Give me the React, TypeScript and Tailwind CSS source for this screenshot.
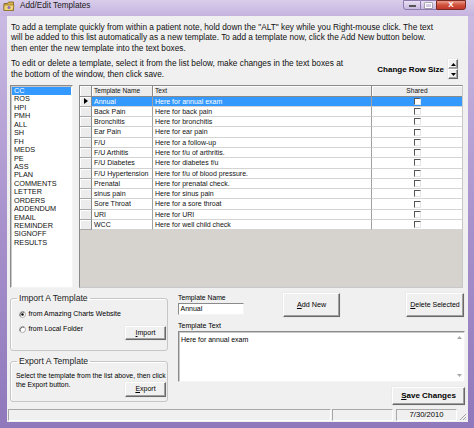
import React from "react";

const rows: [string, string][] = [
  ["Annual", "Here for annual exam"],
  ["Back Pain", "Here for back pain"],
  ["Bronchitis", "Here for bronchitis"],
  ["Ear Pain", "Here for ear pain"],
  ["F/U", "Here for a follow-up"],
  ["F/U Arthitis", "Here for f/u of arthritis."],
  ["F/U Diabetes", "Here for diabetes f/u"],
  ["F/U Hypertension", "Here for f/u of blood pressure."],
  ["Prenatal", "Here for prenatal check."],
  ["sinus pain", "Here for sinus pain"],
  ["Sore Throat", "Here for a sore throat"],
  ["URI", "Here for URI"],
  ["WCC", "Here for well child check"],
];

const listItems = [
  "CC", "ROS", "HPI", "PMH", "ALL", "SH", "FH", "MEDS", "PE", "ASS", "PLAN",
  "COMMENTS", "LETTER", "ORDERS", "ADDENDUM", "EMAIL", "REMINDER", "SIGNOFF", "RESULTS",
];

function Btn({ children, className }: { children: React.ReactNode; className: string }) {
  return (
    <div
      className={
        "flex items-center justify-center bg-[#f0f0f0] border-t border-l border-t-[#ffffff] border-l-[#ffffff] border-r border-b border-r-[#696969] border-b-[#696969] shadow-[inset_-1px_-1px_0_#a0a0a0,0_0_0_0.5px_#e3e3e3] " +
        className
      }
    >
      {children}
    </div>
  );
}

function Check() {
  return (
    <div className="w-[7px] h-[7px] bg-white border-t border-l border-t-[#555] border-l-[#555] border-r border-b border-r-[#e6e6e6] border-b-[#e6e6e6]" />
  );
}

function Radio({ checked }: { checked: boolean }) {
  return (
    <svg width="7" height="7" viewBox="0 0 7 7">
      <circle cx="3.5" cy="3.5" r="3" fill="#fff" stroke="#9a9a9a" strokeWidth="0.8" />
      <path d="M1.3 5.2 A3 3 0 0 1 5.2 1.3" fill="none" stroke="#555" strokeWidth="0.9" />
      {checked && <circle cx="3.5" cy="3.5" r="1.2" fill="#000" />}
    </svg>
  );
}

export default function App() {
  return (
    <div className="w-[474px] h-[428px] flex flex-col bg-gradient-to-b from-[#cdbde4] via-[#a993cd] to-[#8f78bb] font-['Liberation_Sans',Arial,sans-serif] text-black overflow-hidden">
      {/* Title bar */}
      <div className="h-[16px] flex items-start bg-gradient-to-b from-[#d9cdea] to-[#c5b3df]">
        <div className="flex items-center h-[13px] pl-[3px]">
          <svg width="12" height="11" viewBox="0 0 12 11">
            <path d="M1 2.5 L4.5 2.5 L5.5 1 L10.5 1 L10.5 9.5 L1 9.5 Z" fill="#d9b24a" stroke="#7a5e1a" strokeWidth="0.8" />
            <path d="M1 4 L11 4 L10 9.5 L1 9.5 Z" fill="#f1d67a" stroke="#7a5e1a" strokeWidth="0.6" />
            <circle cx="6" cy="6.6" r="1.5" fill="#8a6cc0" />
          </svg>
          <span className="ml-[5px] text-[8.2px] leading-none text-[#1a1a1a]">Add/Edit Templates</span>
        </div>
        <div className="flex-1" />
        <div className="flex h-[10px] mr-[8px]">
          <div className="w-[18px] h-full rounded-bl-[3px] bg-gradient-to-b from-[#e8e0f2] to-[#c7b8de] border border-[#8d7bb0] flex items-end justify-center pb-[2px]">
            <div className="w-[7px] h-[2px] bg-white border border-[#555]" />
          </div>
          <div className="w-[15px] h-full bg-gradient-to-b from-[#e8e0f2] to-[#c7b8de] border-y border-[#8d7bb0] flex items-center justify-center">
            <div className="w-[7px] h-[5px] border border-white shadow-[0_0_0_0.5px_#777]" />
          </div>
          <div className="w-[30px] h-full rounded-br-[3px] bg-gradient-to-b from-[#e89a8a] via-[#d0513b] to-[#c0392b] border border-[#7a2a22] flex items-center justify-center">
            <span className="text-white font-bold text-[8px] leading-none">X</span>
          </div>
        </div>
      </div>

      {/* Window body */}
      <div className="flex-1 flex pl-[7px] pr-[6px] pb-[6px]">
        <div className="w-[461px] h-[406px] bg-[#f0f0f0] flex flex-col">
          {/* Top instructions */}
          <div className="h-[42px] pt-[5.5px] pl-[4px] text-[8.3px] leading-[10.7px] whitespace-nowrap text-[#111]">
            <div>To add a template quickly from within a patient note, hold down the "ALT" key while you Right-mouse click. The text</div>
            <div>will be added to this list automatically as a new template. To add a template now, click the Add New button below.</div>
            <div>then enter the new template into the text boxes.</div>
          </div>
          <div className="h-[22px] flex items-center pl-[4px] pr-[10px]">
            <div className="text-[8.3px] leading-[10.7px] whitespace-nowrap text-[#111]">
              <div>To edit or delete a template, select it from the list below, make changes in the text boxes at</div>
              <div>the bottom of the window, then click save.</div>
            </div>
            <div className="flex-1" />
            <span className="font-bold text-[8px] leading-none mt-[1px]">Change Row Size</span>
            <div className="ml-[4px] flex flex-col w-[10px]">
              <Btn className="h-[10px] w-[10px]">
                <svg width="5" height="3" viewBox="0 0 5 3"><path d="M2.5 0 L5 3 L0 3 Z" fill="#000" /></svg>
              </Btn>
              <Btn className="h-[10px] w-[10px]">
                <svg width="5" height="3" viewBox="0 0 5 3"><path d="M0 0 L5 0 L2.5 3 Z" fill="#000" /></svg>
              </Btn>
            </div>
          </div>

          {/* Main area: list + grid */}
          <div className="mt-[5px] h-[203px] flex pl-[3px]">
            <div className="w-[63px] h-full bg-white border-t border-l border-t-[#8a8a8a] border-l-[#8a8a8a] border-r border-b border-r-[#f4f4f4] border-b-[#f4f4f4] shadow-[inset_1px_1px_0_#c8c8c8] pt-[1px] px-[1px]">
              {listItems.map((it, i) => (
                <div
                  key={it}
                  className={
                    "h-[8.45px] leading-[8.45px] text-[7.3px] pl-[2px] whitespace-nowrap " +
                    (i === 0 ? "bg-[#3399ff] text-white" : "text-[#111]")
                  }
                >
                  {it}
                </div>
              ))}
            </div>

            <div className="ml-[6px] w-[384px] h-full flex flex-col bg-[#d6d3ce] border-l border-t border-r border-b border-l-[#8a8a8a] border-t-[#8a8a8a] border-r-[#c8c8c8] border-b-[#c8c8c8]">
              {/* header */}
              <div className="flex h-[10.5px] text-[6.6px] leading-[10px] text-[#111]">
                <div className="w-[12px] bg-[#ececec] border-r border-b border-[#8a8a8a] shadow-[inset_1px_1px_0_#fff]" />
                <div className="w-[61px] bg-[#ececec] border-r border-b border-[#8a8a8a] shadow-[inset_1px_1px_0_#fff] pl-[2px] whitespace-nowrap">Template Name</div>
                <div className="w-[219px] bg-[#ececec] border-r border-b border-[#8a8a8a] shadow-[inset_1px_1px_0_#fff] pl-[2px]">Text</div>
                <div className="w-[90px] bg-[#ececec] border-b border-[#8a8a8a] shadow-[inset_1px_1px_0_#fff] text-center">Shared</div>
              </div>
              {rows.map(([n, t], i) => {
                const sel = i === 0;
                return (
                  <div key={n} className="flex h-[10.3px] text-[7px] leading-[9.5px]">
                    <div className="w-[12px] bg-[#ececec] border-r border-b border-r-[#8a8a8a] border-b-[#a8a8a8] shadow-[inset_1px_1px_0_#fff] flex items-center justify-center">
                      {sel && (
                        <svg width="4" height="6" viewBox="0 0 4 6"><path d="M0 0 L4 3 L0 6 Z" fill="#000" /></svg>
                      )}
                    </div>
                    <div className={"w-[61px] border-r border-b border-r-[#a0a0a0] border-b-[#d4d4d4] pl-[2px] whitespace-nowrap " + (sel ? "bg-[#3399ff] text-white" : "bg-white text-[#111]")}>{n}</div>
                    <div className={"w-[219px] border-r border-b border-r-[#a0a0a0] border-b-[#d4d4d4] pl-[2px] whitespace-nowrap " + (sel ? "bg-[#3399ff] text-white" : "bg-white text-[#111]")}>{t}</div>
                    <div className={"w-[90px] border-b border-b-[#d4d4d4] flex items-center justify-center " + (sel ? "bg-[#3399ff]" : "bg-white")}>
                      <div className="ml-[1px]"><Check /></div>
                    </div>
                  </div>
                );
              })}
            </div>
          </div>

          {/* Bottom area */}
          <div className="h-[118px] flex pl-[3px]">
            {/* left column */}
            <div className="w-[158px] flex flex-col">
              <fieldset className="mt-[5px] h-[58px] border border-[#c6c6c6] rounded-[3px] shadow-[inset_1px_1px_0_#fff] px-[8px] pr-[1px]">
                <legend className="ml-[-2px] px-[2px] text-[8.6px] leading-[10px] text-[#222]">Import A Template</legend>
                <div className="mt-[6px] flex items-center h-[10px] text-[7px]">
                  <Radio checked={true} />
                  <span className="ml-[2.5px] whitespace-nowrap">from Amazing Charts Website</span>
                </div>
                <div className="mt-[5px] flex items-start">
                  <div className="flex items-center h-[10px] text-[7px]">
                    <Radio checked={false} />
                    <span className="ml-[2.5px] whitespace-nowrap">from Local Folder</span>
                  </div>
                  <div className="flex-1" />
                  <Btn className="mt-[2px] w-[41px] h-[14px] text-[7px]">
                    <span><span className="underline">I</span>mport</span>
                  </Btn>
                </div>
              </fieldset>
              <fieldset className="mt-[5px] h-[46px] border border-[#c6c6c6] rounded-[3px] shadow-[inset_1px_1px_0_#fff] pl-[5px] pr-[1px]">
                <legend className="ml-[1px] px-[2px] text-[8.6px] leading-[10px] text-[#222]">Export A Template</legend>
                <div className="mt-[4.5px] text-[6.9px] leading-[9px] whitespace-nowrap">Select the template from the list above, then click</div>
                <div className="flex items-start">
                  <div className="text-[6.9px] leading-[9px] whitespace-nowrap">the Export button.</div>
                  <div className="flex-1" />
                  <Btn className="mt-[2.5px] w-[41px] h-[15px] text-[7px]">
                    <span><span className="underline">E</span>xport</span>
                  </Btn>
                </div>
              </fieldset>
            </div>

            {/* right column */}
            <div className="ml-[10px] w-[287px] flex flex-col">
              <div className="mt-[5px] flex items-start h-[24px]">
                <div className="w-[66px] flex flex-col">
                  <div className="text-[6.8px] leading-[9px] -mt-[0.5px] whitespace-nowrap">Template Name</div>
                  <div className="mt-[1.5px] h-[12px] bg-white border-t border-l border-t-[#8a8a8a] border-l-[#8a8a8a] border-r border-b border-r-[#f4f4f4] border-b-[#f4f4f4] text-[7px] leading-[10px] pl-[1.5px]">
                    Annual
                  </div>
                </div>
                <Btn className="ml-[39px] w-[57px] h-[24px] text-[7.2px]">
                  <span><span className="underline">A</span>dd New</span>
                </Btn>
                <Btn className="ml-[66px] w-[58px] h-[24px] text-[7px]">
                  <span className="whitespace-nowrap"><span className="underline">D</span>elete Selected</span>
                </Btn>
              </div>
              <div className="mt-[3.5px] text-[7px] leading-[9px]">Template Text</div>
              <div className="mt-[1.5px] h-[51px] flex bg-white border-t border-l border-t-[#8a8a8a] border-l-[#8a8a8a] border-r border-b border-r-[#f4f4f4] border-b-[#f4f4f4] shadow-[inset_1px_1px_0_#c8c8c8]">
                <div className="flex-1 text-[7px] leading-[9px] pl-[2px] pt-[3px]">Here for annual exam</div>
                <div className="w-[10px] flex flex-col justify-between items-center py-[4px]">
                  <svg width="5" height="3" viewBox="0 0 5 3"><path d="M2.5 0 L5 3 L0 3 Z" fill="#a8a8a8" /></svg>
                  <svg width="5" height="3" viewBox="0 0 5 3"><path d="M0 0 L5 0 L2.5 3 Z" fill="#a8a8a8" /></svg>
                </div>
              </div>
              <div className="mt-[5px] flex justify-end">
                <Btn className="w-[73px] h-[18px] text-[8px] font-bold">
                  <span className="whitespace-nowrap"><span className="underline">S</span>ave Changes</span>
                </Btn>
              </div>
            </div>
          </div>

          {/* Status bar */}
          <div className="mt-[3px] h-[12px] flex">
            <div className="ml-[1px] w-[323px] h-full border-t border-l border-t-[#a8a8a8] border-l-[#a8a8a8] border-r border-b border-r-white border-b-white" />
            <div className="ml-[1px] w-[61px] h-full border-t border-l border-t-[#a8a8a8] border-l-[#a8a8a8] border-r border-b border-r-white border-b-white" />
            <div className="ml-[3px] w-[61px] h-full border-t border-l border-t-[#a8a8a8] border-l-[#a8a8a8] border-r border-b border-r-white border-b-white flex items-center justify-center text-[7.6px] leading-none">
              7/30/2010
            </div>
            <div className="flex-1 flex items-end justify-end pr-[1px]">
              <svg width="8" height="8" viewBox="0 0 8 8">
                <path d="M7 1 L1 7 M7 4 L4 7 M7 6.5 L6.5 7" stroke="#9a9a9a" strokeWidth="0.9" />
              </svg>
            </div>
          </div>
        </div>
      </div>
    </div>
  );
}
